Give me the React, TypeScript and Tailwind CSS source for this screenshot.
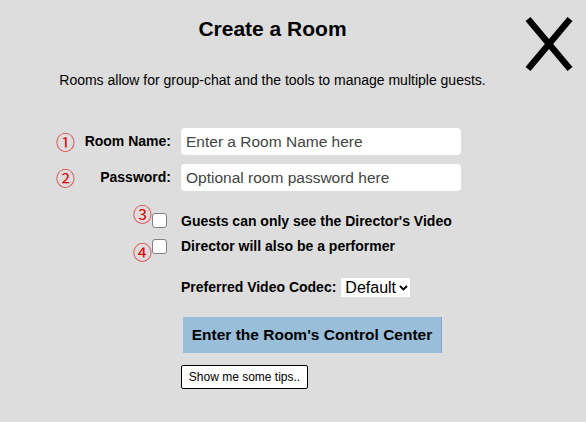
import React from "react";

const circ = "text-[#e00000] font-['Noto_Sans_CJK_JP','DejaVu_Sans',sans-serif] text-[19px]";

export default function App() {
  return (
    <div className="relative w-[586px] h-[422px] bg-[#dddddd] font-['Liberation_Sans',Arial,sans-serif] text-black overflow-hidden">
      <button className="absolute left-[525px] top-[16px] w-[48px] h-[56px]" aria-label="close">
        <svg width="48" height="56" viewBox="0 0 48 56">
          <line x1="3" y1="3" x2="45" y2="53" stroke="#000" strokeWidth="6.5" />
          <line x1="45" y1="3" x2="3" y2="53" stroke="#000" strokeWidth="6.5" />
        </svg>
      </button>
      <div className="w-[545px] flex flex-col">
        <h1 className="mt-[17px] text-center text-[21px] leading-[24px] font-bold">Create a Room</h1>
        <p className="mt-[31px] text-center text-[14px] leading-[16px]">
          Rooms allow for group-chat and the tools to manage multiple guests.
        </p>

        <div className="mt-[40px] ml-[56px] flex items-center h-[27px]">
          <span className={`w-[19px] leading-[20px] ${circ}`}>①</span>
          <span className="w-[96px] text-right text-[14px] font-bold">Room Name:</span>
          <div className="ml-[10px] w-[280px] h-[27px] bg-white rounded-[4px] flex items-center px-[5px] text-[15.5px] text-[#444]">
            Enter a Room Name here
          </div>
        </div>
        <div className="mt-[9px] ml-[56px] flex items-center h-[27px]">
          <span className={`w-[19px] leading-[20px] ${circ}`}>②</span>
          <span className="w-[96px] text-right text-[14px] font-bold">Password:</span>
          <div className="ml-[10px] w-[280px] h-[27px] bg-white rounded-[4px] flex items-center px-[5px] text-[15.5px] text-[#444]">
            Optional room password here
          </div>
        </div>

        <div className="mt-[15px] ml-[133px] flex items-end h-[23px]">
          <span className={`self-start w-[19px] leading-[16px] ${circ}`}>③</span>
          <span className="mb-[1px] w-[15px] h-[15px] bg-white border border-[#808080] rounded-[3px]" />
          <span className="ml-[14px] text-[14px] leading-[16px] font-bold">Guests can only see the Director's Video</span>
        </div>
        <div className="mt-[9px] ml-[133px] flex items-start h-[25px]">
          <span className={`mt-[6px] w-[19px] leading-[16px] ${circ}`}>④</span>
          <span className="mt-[1px] w-[15px] h-[15px] bg-white border border-[#808080] rounded-[3px]" />
          <span className="ml-[14px] text-[14px] leading-[16px] font-bold">Director will also be a performer</span>
        </div>

        <div className="mt-[15px] ml-[181px] flex items-center h-[19px]">
          <span className="text-[14px] font-bold">Preferred Video Codec:</span>
          <div className="ml-[5px] w-[69px] h-[19px] bg-white flex items-center pl-[4px] text-[16px] leading-[19px]">
            Default
            <svg className="ml-[3px]" width="9" height="6" viewBox="0 0 9 6">
              <path d="M1 1 L4.5 4.5 L8 1" fill="none" stroke="#000" strokeWidth="1.8" />
            </svg>
          </div>
        </div>

        <div className="mt-[20px] ml-[183px] w-[259px] h-[36px] bg-[#98bed9] border-r border-[#8c9fd8] flex items-center justify-center text-[15.5px] font-bold">
          Enter the Room's Control Center
        </div>

        <div className="mt-[12px] ml-[181px] w-[127px] h-[24px] bg-white border border-black rounded-[2px] flex items-center justify-center text-[12px]">
          Show me some tips..
        </div>
      </div>
    </div>
  );
}
